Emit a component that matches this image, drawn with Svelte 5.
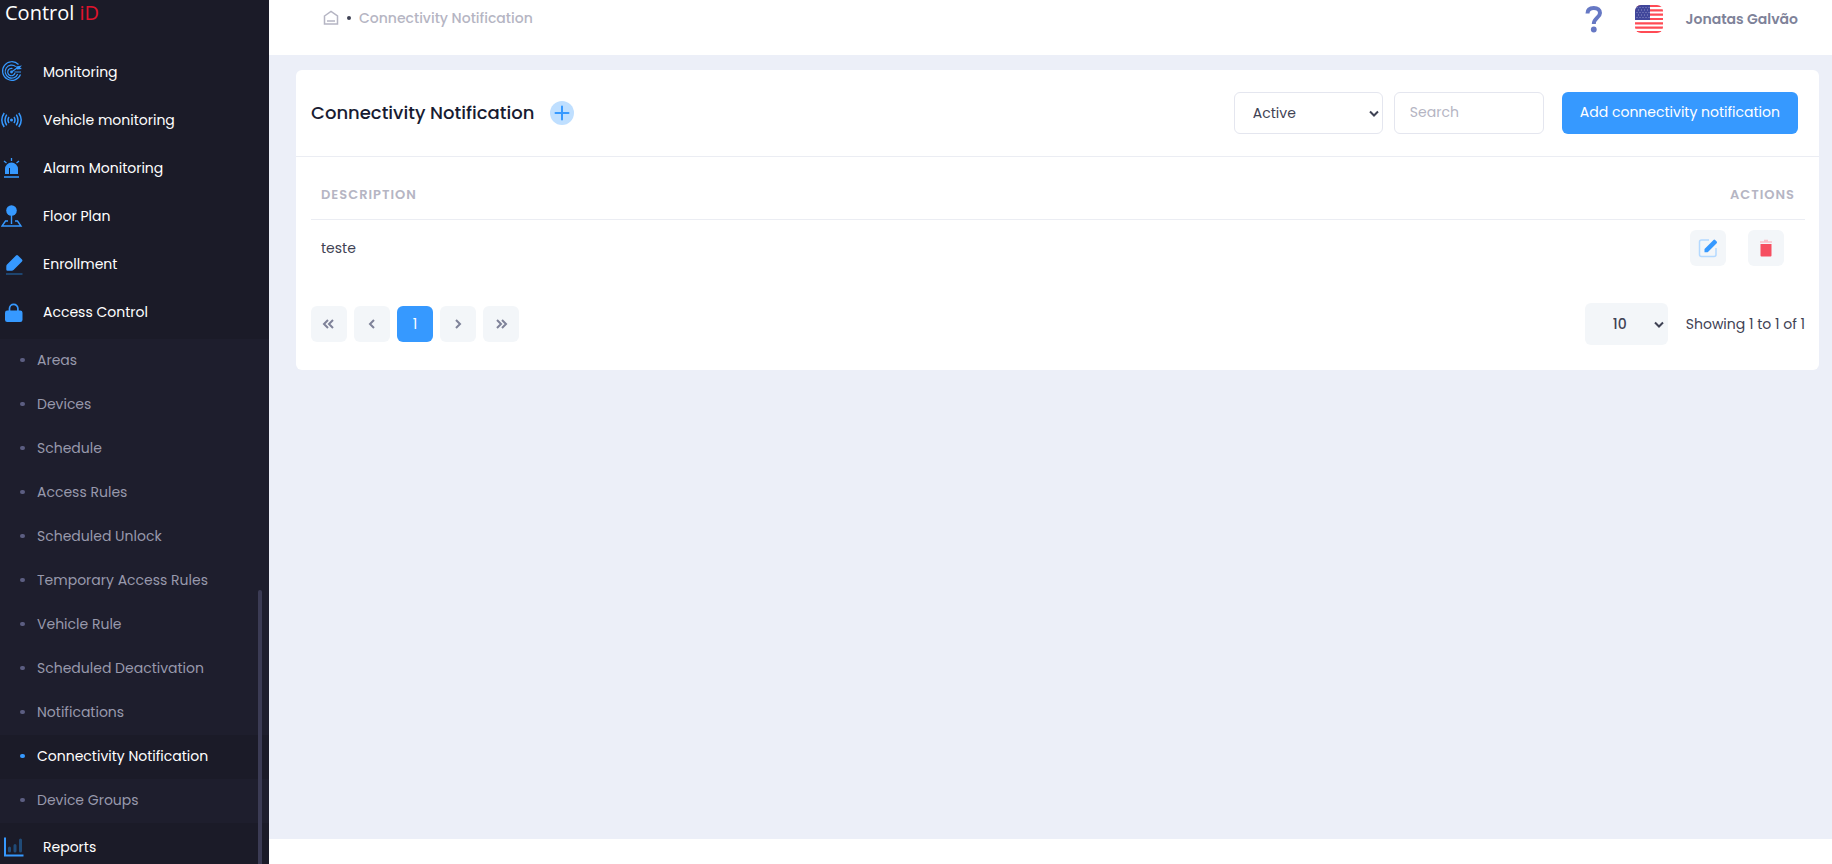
<script>
  const mainItems = [
    { label: 'Monitoring', icon: 'radar' },
    { label: 'Vehicle monitoring', icon: 'signal' },
    { label: 'Alarm Monitoring', icon: 'alarm' },
    { label: 'Floor Plan', icon: 'pin' },
    { label: 'Enrollment', icon: 'pencil' },
    { label: 'Access Control', icon: 'lock' }
  ];
  const subItems = [
    'Areas', 'Devices', 'Schedule', 'Access Rules', 'Scheduled Unlock',
    'Temporary Access Rules', 'Vehicle Rule', 'Scheduled Deactivation',
    'Notifications', 'Connectivity Notification', 'Device Groups'
  ];
  const current = 'Connectivity Notification';
  const rows = ['teste'];
  let status = $state('Active');
  let search = $state('');
  let pageSize = $state('10');
</script>

{#snippet icon(name)}
  <svg class="icon" viewBox="0 0 24 24" aria-hidden="true">
    {#if name === 'radar'}
      <g fill="none" stroke="#3699ff" stroke-width="1.2">
        <path d="M17.500 4.500A9.300 9.300 0 1 0 19.500 14.500" />
        <path d="M14.800 6.600A6.500 6.500 0 1 0 16.700 14" />
        <path d="M11.500 8.500A3.700 3.700 0 1 0 14 13" />
        <path d="M10.500 12 16 8M13.500 12h6.500" />
      </g>
      <path fill="#3699ff" d="m15 6.500 6-1-2 2 2 1.500-5 .5z" />
      <circle cx="10.500" cy="12" r="1.400" fill="#3699ff" />
    {:else if name === 'signal'}
      <g fill="none" stroke="#3699ff" stroke-width="1.500">
        <path d="M3.200 5Q-1.600 12 3.200 19M5.700 6.700Q2.300 12 5.700 17.300M8 9Q6 12 8 15M17.800 5Q22.600 12 17.800 19M15.300 6.700Q18.700 12 15.300 17.300M13 9Q15 12 13 15" />
      </g>
      <circle cx="10.500" cy="12" r="1.500" fill="#3699ff" />
    {:else if name === 'alarm'}
      <path fill="#3699ff" fill-rule="evenodd" d="M4 18v-5a6.500 6.500 0 0 1 13 0v5H9v-6H8v6z" />
      <path fill="#2d7bcc" d="M3 20h15v2H3z" />
      <path d="M10.500 2v3M3 5l2.500 2M18 5l-2.500 2" stroke="#3699ff" stroke-width="1.300" />
    {:else if name === 'pin'}
      <circle cx="10.500" cy="6.500" r="5.300" fill="#3699ff" />
      <path d="M10.500 11v9M7 17H4.500L1 22h19l-3.500-5H14" fill="none" stroke="#3699ff" stroke-width="1.400" />
    {:else if name === 'pencil'}
      <path fill="#3699ff" d="M6 12.500 15 3.500q1-1 2 0l4 4q1 1 0 2l-8.500 8.500q-.7.700-1.700.700H6.500q-1.200 0-1.200-1.200v-3q0-1.300.7-2z" />
      <path stroke="#204b78" stroke-width="1.800" d="M5 22h16.500" />
    {:else if name === 'lock'}
      <path d="M8.500 11V8.500a4.200 4.200 0 0 1 8.400 0V11" fill="none" stroke="#3699ff" stroke-width="1.700" />
      <rect x="4" y="10.500" width="17.500" height="11.500" rx="2.200" fill="#3699ff" />
    {:else if name === 'chart'}
      <path d="M4 2.500V20.500H22.500" fill="none" stroke="#3699ff" stroke-width="2" />
      <path d="M8.500 13v3M14 10.500v5.500M19.500 5v11" stroke="#204b78" stroke-width="3" stroke-linecap="round" />
    {/if}
  </svg>
{/snippet}

<div class="page">
  <aside>
    <div class="brand">Control <span>iD</span></div>
    <nav aria-label="Main">
      <ul class="main-list">
        {#each mainItems as item}
          <li><a class="main-link" href="#top">{@render icon(item.icon)}{item.label}</a></li>
        {/each}
      </ul>
      <ul class="sub">
        {#each subItems as item}
          <li><a class="sub-link" class:active={item === current} href="#top"><i></i>{item}</a></li>
        {/each}
      </ul>
      <ul>
        <li><a class="main-link" href="#top">{@render icon('chart')}Reports</a></li>
      </ul>
    </nav>
    <div class="scrollbar"></div>
  </aside>

  <div class="content">
    <header>
      <nav class="crumbs" aria-label="Breadcrumb">
        <a href="#top" aria-label="Home">
          <svg width="16" height="16" viewBox="0 0 16 16" fill="none" stroke="#b5b5c3" stroke-width="1.500">
            <path d="M1.500 6 8 1.500 14.500 6v8h-13zM4 11h8" />
          </svg>
        </a>
        <b></b>
        <a href="#top">Connectivity Notification</a>
      </nav>
      <div class="user">
        <button class="help" aria-label="Help">
          <svg width="18" height="28" viewBox="0 0 18 28" fill="none">
            <path d="M2.500 8.500C2.500 4.500 5 3 8.800 3S15 5 15 8C15 12.500 8.800 13 8.800 19" stroke="#6678c4" stroke-width="4" />
            <circle cx="8.800" cy="24.500" r="2.900" fill="#6678c4" />
          </svg>
        </button>
        <button class="flag" aria-label="Language">
          <svg width="28" height="28" viewBox="0 0 28 28">
            <rect width="28" height="28" fill="#fff" />
            <path d="M0 1h28M0 5.300h28M0 9.600h28M0 14h28M0 18.300h28M0 22.600h28M0 27h28" stroke="#ff4b55" stroke-width="2.200" />
            <rect width="15" height="15" fill="#41479b" />
            <path d="M1.500 2.500h13M3 5h11M1.500 7.500h13M3 10h11M1.500 12.500h13" stroke="#8f93c6" stroke-dasharray="1 2" />
          </svg>
        </button>
        <span class="name">Jonatas Galvão</span>
      </div>
    </header>

    <main>
      <section class="card">
        <div class="card-head">
          <h1>Connectivity Notification</h1>
          <button class="plus" aria-label="Add">
            <svg width="24" height="24" viewBox="0 0 24 24">
              <circle cx="12" cy="12" r="12" fill="#bfdfff" />
              <path d="M12 5.500v13M5.500 12h13" stroke="#3699ff" stroke-width="2" stroke-linecap="round" />
            </svg>
          </button>
          <div class="tools">
            <div class="select status">
              <select aria-label="Status" bind:value={status}><option>Active</option><option>Inactive</option></select>
              <svg width="10" height="7" viewBox="0 0 10 7"><path d="m1 1.500 4 4 4-4" /></svg>
            </div>
            <input type="text" placeholder="Search" aria-label="Search" bind:value={search} />
            <button class="add">Add connectivity notification</button>
          </div>
        </div>
        <div class="card-body">
          <table>
            <thead><tr><th>DESCRIPTION</th><th class="right">ACTIONS</th></tr></thead>
            <tbody>
              {#each rows as row}
                <tr>
                  <td>{row}</td>
                  <td>
                    <div class="actions">
                      <button class="square" aria-label="Edit">
                        <svg width="20" height="20" viewBox="0 0 20 20">
                          <path d="M11 2H3.500Q1.500 2 1.500 4v12.500q0 2 2 2H16q2 0 2-2V10" fill="none" stroke="#b4d9ff" stroke-width="1.500" />
                          <path fill="#3699ff" d="m6.500 11 9-9q.8-.8 1.600 0l1.600 1.600q.8.800 0 1.600l-8.500 8.500q-.6.600-1.400.600H6.500z" />
                        </svg>
                      </button>
                      <button class="square" aria-label="Delete">
                        <svg width="20" height="20" viewBox="0 0 20 20">
                          <path d="M4 4h12M8 2.500h4" stroke="#fbc0c9" stroke-width="1.500" />
                          <path d="M4.500 6h11v11.500q0 1-1 1h-9q-1 0-1-1z" fill="#f64e60" />
                        </svg>
                      </button>
                    </div>
                  </td>
                </tr>
              {/each}
            </tbody>
          </table>
          <div class="pager">
            {#each [['First', 'm8 3-4 4 4 4M13 3 9 7l4 4'], ['Previous', 'm11 3-4 4 4 4']] as [label, d]}
              <button class="square" aria-label={label}><svg width="18" height="14" viewBox="0 0 18 14"><path {d} /></svg></button>
            {/each}
            <button class="square on">1</button>
            {#each [['Next', 'm7 3 4 4-4 4'], ['Last', 'm5 3 4 4-4 4M10 3l4 4-4 4']] as [label, d]}
              <button class="square" aria-label={label}><svg width="18" height="14" viewBox="0 0 18 14"><path {d} /></svg></button>
            {/each}
            <div class="select size">
              <select aria-label="Rows per page" bind:value={pageSize}><option>10</option><option>25</option><option>50</option></select>
              <svg width="10" height="7" viewBox="0 0 10 7"><path d="m1 1.500 4 4 4-4" /></svg>
            </div>
            <span>Showing 1 to 1 of 1</span>
          </div>
        </div>
      </section>
    </main>
    <footer></footer>
  </div>
</div>

<style>
  :global(body) { margin: 0; }
  .page, .page * { box-sizing: border-box; }
  .page {
    display: flex;
    height: 100vh;
    overflow: hidden;
    background: #fff;
    color: #3f4254;
    font: 14px/20px Poppins, Inter, sans-serif;
  }
  a { color: inherit; text-decoration: none; }
  ul { list-style: none; margin: 0; padding: 0; }
  button { font: inherit; border: 0; padding: 0; background: none; cursor: pointer; }
  svg { display: block; }

  aside { position: relative; flex: none; width: 269px; overflow: hidden; background: #1b1b28; }
  .brand { height: 48px; padding-left: 5px; color: #fff; font: 20px/26px "Open Sans", sans-serif; }
  .brand span { color: #e0142d; font-weight: 500; }
  .main-list { padding-bottom: 3px; }
  .main-link { display: flex; align-items: center; gap: 18px; height: 48px; padding-left: 1px; color: #fff; }
  .icon { width: 24px; height: 24px; flex: none; }
  .sub { background: #1e1e2d; }
  .sub-link { display: flex; align-items: center; gap: 12px; height: 44px; padding: 0 0 2px 20px; color: #9899ac; }
  .sub-link i { width: 5px; height: 4px; border-radius: 2px; background: #5c5e81; }
  .sub-link.active { background: #1b1b28; color: #fff; }
  .sub-link.active i { background: #3699ff; }
  .scrollbar { position: absolute; right: 7px; top: 590px; bottom: 0; width: 4px; border-radius: 4px 4px 0 0; background: #3b3b54; }

  .content { flex: 1; min-width: 0; display: flex; flex-direction: column; }
  header { display: flex; justify-content: space-between; height: 55px; padding: 0 31px 0 54px; font-weight: 500; }
  .crumbs { display: flex; align-items: center; height: 36px; color: #b5b5c3; }
  .crumbs b { width: 4px; height: 4px; margin: 0 8px; border-radius: 2px; background: #3f4254; }
  .user { display: flex; align-items: center; height: 37px; }
  .flag { margin: 0 23px 0 32px; border-radius: 6px; overflow: hidden; }
  .name { padding-right: 3px; color: #7e8299; font-weight: 600; }

  main { flex: 1; padding: 15px 13px 0 27px; background: #eceff8; }
  footer { height: 25px; background: #fff; }
  .card { border-radius: 6px; background: #fff; }
  .card-head { display: flex; align-items: center; height: 87px; padding: 0 21px 0 15px; border-bottom: 1px solid #ebedf3; }
  h1 { margin: 0; font-size: 18px; line-height: 24px; font-weight: 500; color: #181c32; }
  .plus { margin-left: 16px; }
  .tools { display: flex; align-items: center; margin-left: auto; }
  .select { position: relative; height: 42px; }
  .select svg { position: absolute; right: 4px; top: 18px; fill: none; stroke: #3f4254; stroke-width: 2; pointer-events: none; }
  select, input { width: 100%; height: 42px; border: 1px solid #e4e6ef; border-radius: 6px; background: #fff; color: #3f4254; font: inherit; outline: 0; }
  select { appearance: none; padding: 0 18px; }
  .status { width: 149px; margin-right: 11px; }
  input { width: 150px; margin-right: 18px; padding: 0 15px 2px; }
  input::placeholder { color: #b5b5c3; opacity: 1; }
  .add { height: 42px; padding: 0 18px 2px; border-radius: 6px; background: #3699ff; color: #fff; white-space: nowrap; }

  .card-body { padding: 14px 14px 25px 15px; }
  table { width: 100%; border-collapse: collapse; }
  th { height: 48px; padding: 0 10px; border-bottom: 1px solid #ebedf3; text-align: left; font-size: 13px; font-weight: 600; letter-spacing: 1px; color: #b5b5c3; }
  .right { text-align: right; }
  td { height: 58px; padding: 0 10px; }
  .actions { display: flex; justify-content: flex-end; gap: 22px; padding-right: 11px; }
  .square { display: grid; place-items: center; width: 36px; height: 36px; border-radius: 6px; background: #f3f6f9; }
  .on { background: #3699ff; color: #fff; }
  .pager { display: flex; align-items: center; gap: 7px; margin-top: 26px; }
  .pager .square svg { fill: none; stroke: #7e8299; stroke-width: 2; }
  .size { width: 83px; margin: 0 11px 0 auto; }
  .size select { padding: 0 28px; border: 0; background: #f3f6f9; font-weight: 500; }
</style>
